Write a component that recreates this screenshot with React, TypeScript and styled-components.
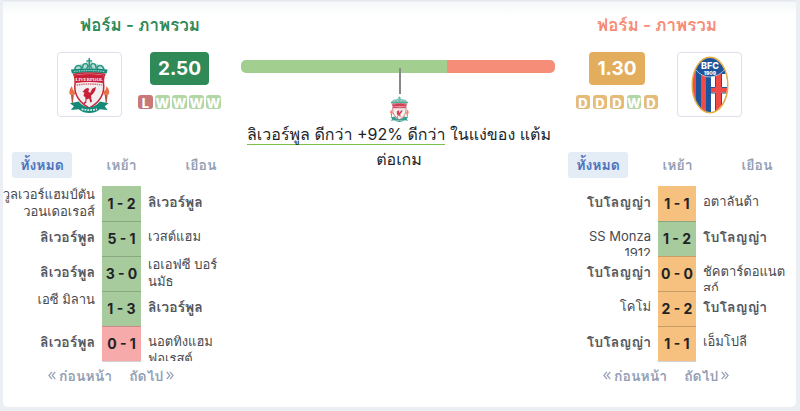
import React, { useState } from 'react';
import styled, { createGlobalStyle } from 'styled-components';

const GlobalStyle = createGlobalStyle`
  *, *::before, *::after { box-sizing: border-box; }
  body {
    margin: 0;
    background: #ebeef3;
    color: #222529;
    font-family: Inter, Tahoma, Loma, Waree, "Noto Sans Thai Looped", "Noto Sans", sans-serif;
    font-size: 14px;
  }
  button { font-family: inherit; cursor: pointer; }
`;

const Card = styled.main`
  display: grid;
  grid-template-columns: 225px minmax(0, 1fr) 228px;
  margin: 0 4px 4px 3px;
  padding-bottom: 18px;
  background: linear-gradient(#e6e8f0 0, #e6e8f0 1px, #f5f7f8 2px, #ffffff 16px);
  border-radius: 0 0 5px 5px;
`;

const Panel = styled.section`
  min-width: 0;
  padding-top: 13px;
`;

const Summary = styled.div<{ $away?: boolean }>`
  display: flex;
  flex-direction: column;
  align-items: ${p => (p.$away ? 'flex-start' : 'flex-end')};
  padding: ${p => (p.$away ? '0 0 0 8px' : '0 7px 0 0')};
`;

const Title = styled.h2`
  width: 162px;
  margin: 0 0 15px;
  color: #2f8a58;
  font-size: 17px;
  font-weight: 600;
  line-height: 24px;
  text-align: center;
  white-space: nowrap;
`;

const AwayTitle = styled(Title)`
  color: #f68b76;
`;

const Team = styled.div<{ $away?: boolean }>`
  display: flex;
  flex-direction: ${p => (p.$away ? 'row-reverse' : 'row')};
  gap: ${p => (p.$away ? '19px' : '16px')};
`;

const CrestFrame = styled.div`
  display: grid;
  place-items: center;
  width: 65px;
  height: 65px;
  background: #fff;
  border: 1px solid #dddfe9;
  border-radius: 4px;
`;

const Stats = styled.div`
  display: flex;
  flex-direction: column;
  align-items: center;
  gap: 10px;
`;

const Rating = styled.strong<{ $away?: boolean }>`
  padding: 0 8px;
  border-radius: 4px;
  background: ${p => (p.$away ? '#e2ad5c' : '#2f8a58')};
  color: #fff;
  font-size: 19px;
  font-weight: 700;
  line-height: 33px;
`;

const Form = styled.div<{ $away?: boolean }>`
  display: grid;
  grid-auto-flow: column;
  grid-auto-columns: ${p => (p.$away ? '14px' : '15px')};
  gap: ${p => (p.$away ? '3px' : '2px')};
`;

const chipColors: Record<string, string> = { L: '#c97777', W: '#b3d6a6', D: '#e6bb79' };

const Chip = styled.span<{ $result: string }>`
  display: flex;
  justify-content: center;
  height: 14px;
  border-radius: 3px;
  background: ${p => chipColors[p.$result]};
  color: #fff;
  font-size: 13px;
  font-weight: 800;
  line-height: 16px;
`;

const Tabs = styled.div<{ $away?: boolean }>`
  display: grid;
  grid-template-columns: 60px 99px 60px;
  align-items: center;
  margin: 35px 0 8px ${p => (p.$away ? '0' : '9px')};
`;

const Tab = styled.button<{ $active: boolean }>`
  height: 26px;
  padding: 0;
  border: 0;
  border-radius: 3px;
  background: ${p => (p.$active ? '#e4ecf6' : 'transparent')};
  color: ${p => (p.$active ? '#4a72bd' : '#949fb5')};
  font-size: 14px;
  font-weight: 600;
`;

const Results = styled.table<{ $away?: boolean }>`
  width: 100%;
  table-layout: fixed;
  border-collapse: collapse;

  col:first-child { width: ${p => (p.$away ? '90px' : '99px')}; }
  col:nth-child(2) { width: ${p => (p.$away ? '38px' : '39px')}; }
`;

const Cell = styled.td`
  height: 35px;
  padding: 0;
  vertical-align: top;
`;

const Name = styled.div<{ $own?: boolean; $end?: boolean; $raised?: boolean }>`
  display: flex;
  flex-direction: column;
  align-items: ${p => (p.$end ? 'flex-end' : 'flex-start')};
  height: 35px;
  padding: ${p => (p.$raised ? '0' : '7px')} 7px 0;
  overflow: hidden;
  color: ${p => (p.$own ? '#55575c' : '#484a4f')};
  font-size: ${p => (p.$own ? '14px' : '13px')};
  font-weight: ${p => (p.$own ? 600 : 400)};
  line-height: 17px;
  white-space: nowrap;
`;

const tones: Record<string, string> = { win: '#a8cb9e', loss: '#f6aaa9', draw: '#f6c07e' };

const Score = styled.td<{ $tone: string }>`
  height: 35px;
  padding: 0;
  border-bottom: 1px solid rgba(0, 0, 0, 0.18);
  background: ${p => tones[p.$tone]};
  color: #202326;
  font-size: 14px;
  font-weight: 700;
  text-align: center;
  white-space: nowrap;
`;

const Pager = styled.nav<{ $away?: boolean }>`
  display: flex;
  gap: 17px;
  padding: 1px 0 0 ${p => (p.$away ? '35px' : '45px')};
`;

const PageButton = styled.button`
  display: flex;
  align-items: center;
  gap: 3px;
  height: 26px;
  padding: 0;
  border: 0;
  background: none;
  color: #949fb5;
  font-size: 14px;
  font-weight: 600;
  white-space: nowrap;
`;

const Comparison = styled.section`
  display: flex;
  flex-direction: column;
  align-items: center;
  min-width: 0;
  padding: 60px 13px 0;
`;

const Bar = styled.div`
  display: flex;
  width: 100%;
  height: 13px;
  border-radius: 5px;
  overflow: hidden;
`;

const Share = styled.div<{ $grow: number; $color: string }>`
  flex: ${p => p.$grow} 0 0;
  background: ${p => p.$color};
`;

const Marker = styled.div`
  display: flex;
  flex-direction: column;
  align-items: center;
  gap: 2px;
  margin: -5px 0 0 3px;
  z-index: 1;
`;

const Pointer = styled.div`
  width: 2px;
  height: 26px;
  background: #888;
`;

const Verdict = styled.p`
  margin: 0 0 0 2px;
  color: #212529;
  font-size: 16px;
  line-height: 25px;
  text-align: center;
  white-space: nowrap;
`;

const Highlight = styled.span`
  border-bottom: 1px solid #7cc24a;
`;

function LiverpoolCrest({ height, faded }: { height: number; faded?: boolean }) {
  return (
    <svg height={height} viewBox="0 0 42 58" opacity={faded ? 0.85 : 1} aria-label="Liverpool" role="img">
      <path d="M4 14Q5 8 11 8Q14 6 17 7Q18 3 21 2Q24 3 25 7Q28 6 31 8Q37 8 38 14L36 17H6Z" fill="#b9ded6" />
      <path d="M6 13q1-5 5-4q3 1 1 4M14 12q0-6 4-5q3 2 0 5M24 12q-3-3 0-5q4-1 4 5M30 13q-2-3 1-4q4-1 5 4M21 1v11M18 4h6" fill="none" stroke="#2a9786" strokeWidth="1.5" />
      <path d="M2 13Q21 11 40 13L39 17Q21 15 3 17Z" fill="#168a79" />
      <path d="M5 15Q21 13 37 15" fill="none" stroke="#b8dfd7" strokeWidth="1.2" strokeDasharray="1 .8" />
      <path d="M5 18Q21 15 37 18Q35 22 36 31Q36 44 21 53Q6 44 6 31Q7 22 5 18Z" fill="#f3eff0" stroke="#c6283b" strokeWidth="1.6" />
      <path d="M6 19Q21 16 36 19L35 27Q21 25 7 27Z" fill="#c91f37" />
      <text x="21" y="25" textAnchor="middle" fill="#fff" fontFamily="Liberation Serif" fontWeight="700" fontSize="4.8">LIVERPOOL</text>
      <path d="M8 29Q21 27 34 29" fill="none" stroke="#d46876" strokeWidth="1.5" strokeDasharray="1.5 .8" />
      <path d="M17 33l2-1 2 1-1 3 2 1 2-4 4-2-1 4-2 3-2 2v3l1 3-2 1-1-4-3 1v3l-2 2-1-2 2-1v-4l-2-2 1-3-2-1z" fill="#c91f37" />
      <path d="M3 30Q-1 35 1 39H6Q7 36 4 34ZM39 30Q43 35 41 39H36Q35 36 38 34Z" fill="#ea7044" />
      <path d="M2 39H5L4 48H3ZM37 39H40L39 48H38Z" fill="#b85546" />
      <path d="M1 48L10 46Q15 52 21 52Q27 52 32 46L41 48L37 51L40 55L32 54Q27 58 21 58Q15 58 10 54L2 55L5 51Z" fill="#168a79" />
      <path d="M13 54Q21 56 29 54" fill="none" stroke="#d1ebe5" strokeWidth="1.8" strokeDasharray="2 1" />
    </svg>
  );
}

function BolognaCrest() {
  return (
    <svg width="38" height="58" viewBox="0 0 38 58" aria-label="Bologna" role="img">
      <defs><clipPath id="bologna-shape"><ellipse cx="19" cy="29" rx="17.4" ry="27.2" /></clipPath></defs>
      <g clipPath="url(#bologna-shape)">
        <path d="M0 0H38V58H0Z" fill="#1d549c" />
        <path d="M0 12H5V58H0ZM10 17H15V58H10Z" fill="#ef4b47" />
        <path d="M19.5 18H38V58H19.5Z" fill="#fff" />
        <path d="M25 17H30V58H25ZM19.5 32H38V36.5H19.5Z" fill="#ef4b47" />
        <path d="M24.5 18V31.5H19.5M30.5 18V31.5H38M24.5 58V37H19.5M30.5 58V37H38M19.5 18V58" fill="none" stroke="#1d549c" />
        <path d="M0 0H38V12Q31 20 19 21Q10 20 4 13Z" fill="#1d549c" />
        <path d="M5 14Q11 21 19 21Q29 20 34 13" fill="none" stroke="#cbd7e8" strokeWidth=".8" />
      </g>
      <text x="19" y="13" textAnchor="middle" fill="#fff" fontFamily="Inter" fontSize="9" fontWeight="800">BFC</text>
      <text x="19" y="18.5" textAnchor="middle" fill="#fff" fontFamily="Inter" fontSize="5" fontWeight="800">1909</text>
      <ellipse cx="19" cy="29" rx="17.8" ry="27.8" fill="none" stroke="#e5ad43" strokeWidth="1.5" />
    </svg>
  );
}

function Chevrons({ right }: { right?: boolean }) {
  return (
    <svg width="8" height="9" viewBox="0 0 8 9" fill="none" stroke="currentColor" strokeWidth="1.2" aria-hidden="true">
      <path d={right ? 'M.7.8L3.8 4.5L.7 8.2M4 .8L7.1 4.5L4 8.2' : 'M4 .8L.9 4.5L4 8.2M7.3.8L4.2 4.5L7.3 8.2'} />
    </svg>
  );
}

type Side = { lines: string[]; own?: boolean; raised?: boolean };
type Match = { home: Side; score: string; away: Side; tone: string };

const LIV: Side = { lines: ['ลิเวอร์พูล'], own: true };
const BOL: Side = { lines: ['โบโลญญ่า'], own: true };

const liverpoolMatches: Match[] = [
  { home: { lines: ['วูลเวอร์แฮมป์ตัน', 'วอนเดอเรอส์'], raised: true }, score: '1 - 2', away: LIV, tone: 'win' },
  { home: LIV, score: '5 - 1', away: { lines: ['เวสต์แฮม'] }, tone: 'win' },
  { home: LIV, score: '3 - 0', away: { lines: ['เอเอฟซี บอร์', 'นมัธ'], raised: true }, tone: 'win' },
  { home: { lines: ['เอซี มิลาน'], raised: true }, score: '1 - 3', away: LIV, tone: 'win' },
  { home: LIV, score: '0 - 1', away: { lines: ['นอตทิงแฮม', 'ฟอเรสต์'] }, tone: 'loss' },
];

const bolognaMatches: Match[] = [
  { home: BOL, score: '1 - 1', away: { lines: ['อตาลันต้า'] }, tone: 'draw' },
  { home: { lines: ['SS Monza', '1912'] }, score: '1 - 2', away: BOL, tone: 'win' },
  { home: BOL, score: '0 - 0', away: { lines: ['ชัคตาร์ดอแนต', 'สก์'] }, tone: 'draw' },
  { home: { lines: ['โคโม่'] }, score: '2 - 2', away: BOL, tone: 'draw' },
  { home: BOL, score: '1 - 1', away: { lines: ['เอ็มโปลี'] }, tone: 'draw' },
];

function TeamName({ side, end }: { side: Side; end?: boolean }) {
  return (
    <Name $own={side.own} $raised={side.raised} $end={end}>
      {side.lines.map(line => <span key={line}>{line}</span>)}
    </Name>
  );
}

function TeamPanel({ away, rating, form, matches }: { away?: boolean; rating: string; form: string; matches: Match[] }) {
  const [tab, setTab] = useState(0);
  const Heading = away ? AwayTitle : Title;
  return (
    <Panel>
      <Summary $away={away}>
        <Heading>ฟอร์ม - ภาพรวม</Heading>
        <Team $away={away}>
          <CrestFrame>{away ? <BolognaCrest /> : <LiverpoolCrest height={56} />}</CrestFrame>
          <Stats>
            <Rating $away={away}>{rating}</Rating>
            <Form $away={away}>{form.split('').map((result, i) => <Chip key={i} $result={result}>{result}</Chip>)}</Form>
          </Stats>
        </Team>
      </Summary>
      <Tabs $away={away}>
        {['ทั้งหมด', 'เหย้า', 'เยือน'].map((label, i) => (
          <Tab key={label} $active={tab === i} onClick={() => setTab(i)}>{label}</Tab>
        ))}
      </Tabs>
      <Results $away={away}>
        <colgroup><col /><col /><col /></colgroup>
        <tbody>
          {matches.map((match, i) => (
            <tr key={i}>
              <Cell><TeamName side={match.home} end /></Cell>
              <Score $tone={match.tone}>{match.score}</Score>
              <Cell><TeamName side={match.away} /></Cell>
            </tr>
          ))}
        </tbody>
      </Results>
      <Pager $away={away}>
        <PageButton><Chevrons />ก่อนหน้า</PageButton>
        <PageButton>ถัดไป<Chevrons right /></PageButton>
      </Pager>
    </Panel>
  );
}

export default function App() {
  return (
    <>
      <GlobalStyle />
      <Card>
        <TeamPanel rating="2.50" form="LWWWW" matches={liverpoolMatches} />
        <Comparison>
          <Bar>
            <Share $grow={206} $color="#a2cf90" />
            <Share $grow={108} $color="#f68d78" />
          </Bar>
          <Marker>
            <Pointer />
            <LiverpoolCrest height={26} faded />
          </Marker>
          <Verdict>
            <Highlight>ลิเวอร์พูล ดีกว่า +92% ดีกว่า</Highlight> ในแง่ของ แต้ม<br />ต่อเกม
          </Verdict>
        </Comparison>
        <TeamPanel away rating="1.30" form="DDDWD" matches={bolognaMatches} />
      </Card>
    </>
  );
}
